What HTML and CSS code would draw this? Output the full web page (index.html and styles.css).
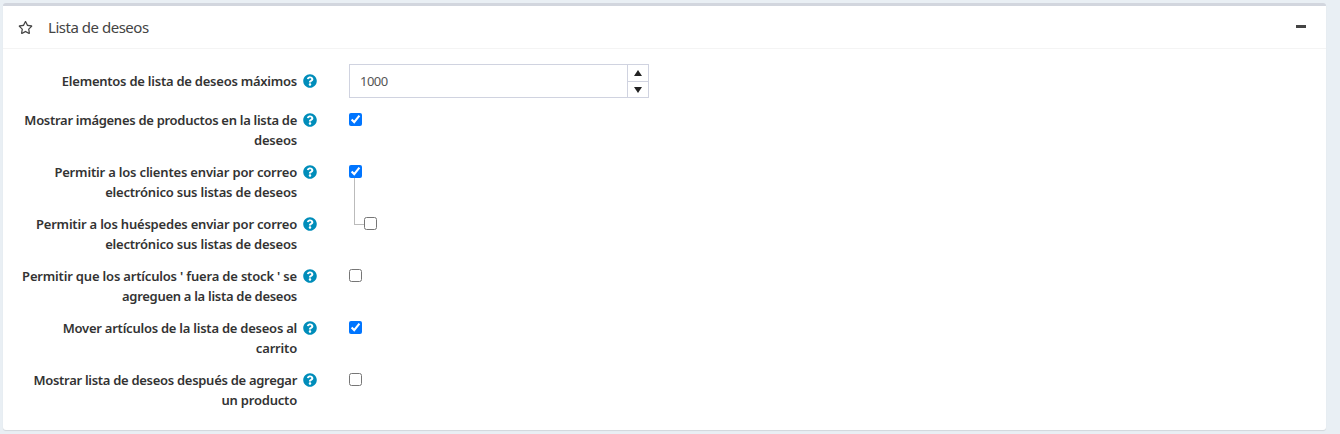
FILE: index.html
```
<!DOCTYPE html>
<html lang="es">
<head>
<meta charset="utf-8">
<title>Lista de deseos</title>
<link rel="stylesheet" href="styles.css">
</head>
<body>
<svg class="defs" width="0" height="0" aria-hidden="true">
  <symbol id="help" viewBox="0 0 512 512"><path d="M504 256c0 136.997-111.043 248-248 248S8 392.997 8 256C8 119.083 119.043 8 256 8s248 111.083 248 248zM262.655 90c-54.497 0-89.255 22.957-116.549 63.758-3.536 5.286-2.353 12.415 2.715 16.258l34.699 26.31c5.205 3.947 12.621 3.008 16.665-2.122 17.864-22.658 30.113-35.797 57.303-35.797 20.429 0 45.698 13.148 45.698 32.958 0 14.976-12.363 22.667-32.534 33.976C247.128 238.528 216 254.941 216 296v4c0 6.627 5.373 12 12 12h56c6.627 0 12-5.373 12-12v-1.333c0-28.462 83.186-29.647 83.186-106.667 0-58.002-60.165-102-116.531-102zM256 338c-25.365 0-46 20.635-46 46 0 25.364 20.635 46 46 46s46-20.636 46-46c0-25.365-20.635-46-46-46z"/></symbol>
</svg>
<section class="card">
  <header class="card-header">
    <svg class="star" viewBox="0 0 576 512"><path d="M528.1 171.5L382 150.2 316.700 17.800c-11.700-23.600-45.600-23.900-57.400 0L194 150.200 47.900 171.500c-26.200 3.800-36.700 36.100-17.700 54.600l105.700 103-25 145.500c-4.500 26.300 23.200 46 46.400 33.700L288 439.600l130.700 68.700c23.200 12.200 50.900-7.400 46.400-33.700l-25-145.500 105.700-103c19-18.500 8.500-50.800-17.700-54.600zM388.600 312.300l23.700 138.400L288 385.400l-124.300 65.300 23.700-138.400-100.600-98 139-20.200 62.200-126 62.200 126 139 20.200-100.600 98z"/></svg>
    <h1 class="title">Lista de deseos</h1>
    <button class="collapse" aria-label="Contraer"></button>
  </header>
  <div class="card-body">
    <div class="row row-number">
      <label class="label"><span class="snug">Elementos de lista de deseos máximos</span></label>
      <svg class="help"><use href="#help"/></svg>
      <div class="number"><span class="value">1000</span><span class="steps"><i class="step"><svg viewBox="0 0 8 6"><path d="M4 0 8 6H0z"/></svg></i><i class="step"><svg viewBox="0 0 8 6"><path d="M0 0H8L4 6z"/></svg></i></span></div>
    </div>
    <div class="row">
      <label class="label"><span class="tight">Mostrar imágenes de productos en la lista de</span><span>deseos</span></label>
      <svg class="help"><use href="#help"/></svg>
      <input class="check" type="checkbox" checked>
    </div>
    <div class="row">
      <label class="label"><span class="loose">Permitir a los clientes enviar por correo</span><span>electrónico sus listas de deseos</span></label>
      <svg class="help"><use href="#help"/></svg>
      <input class="check" type="checkbox" checked>
    </div>
    <div class="row">
      <label class="label"><span>Permitir a los huéspedes enviar por correo</span><span>electrónico sus listas de deseos</span></label>
      <svg class="help"><use href="#help"/></svg>
      <div class="nested"><span class="branch"></span><input class="check" type="checkbox"></div>
    </div>
    <div class="row">
      <label class="label"><span class="loose">Permitir que los artículos ' fuera de stock ' se</span><span class="tight">agreguen a la lista de deseos</span></label>
      <svg class="help"><use href="#help"/></svg>
      <input class="check" type="checkbox">
    </div>
    <div class="row">
      <label class="label"><span class="snug">Mover artículos de la lista de deseos al</span><span class="loose">carrito</span></label>
      <svg class="help"><use href="#help"/></svg>
      <input class="check" type="checkbox" checked>
    </div>
    <div class="row">
      <label class="label"><span class="tight">Mostrar lista de deseos después de agregar</span><span>un producto</span></label>
      <svg class="help"><use href="#help"/></svg>
      <input class="check" type="checkbox">
    </div>
  </div>
</section>
</body>
</html>
```
FILE: styles.css
```
* { box-sizing: border-box; }
body { margin: 0; padding: 3px 14px 0 3px; height: 434px; overflow: hidden; background: #e9eff4; font-family: "Noto Sans", sans-serif; color: #333; }
.defs { position: absolute; }
.card { height: 427px; background: #fff; border-top: 3px solid #d2d6de; border-radius: 3px; box-shadow: 0 1px 1px rgba(0,0,0,.1); }
.card-header { display: flex; align-items: center; height: 43px; padding: 0 20px 0 15px; border-bottom: 1px solid #f4f4f4; }
.star { width: 15px; height: 13px; fill: #444; }
.title { margin: 0 auto 0 15px; font-size: 15px; font-weight: 400; line-height: 20px; color: #444; letter-spacing: -.48px; }
.collapse { width: 10px; height: 3px; margin-top: -2px; padding: 0; border: 0; background: #444; }
.card-body { padding-top: 15px; }
.row { display: flex; align-items: flex-start; height: 40px; margin-bottom: 12px; }
.row-number { height: 34px; }
.label { display: flex; flex-direction: column; align-items: flex-end; width: 294px; font-size: 13px; font-weight: 600; line-height: 20px; white-space: nowrap; letter-spacing: -.2px; }
.snug { letter-spacing: -.24px; }
.tight { letter-spacing: -.29px; }
.loose { letter-spacing: -.18px; }
.row-number .label { padding-top: 7px; }
.help { width: 14px; height: 14px; margin: 3px 32px 0 6px; fill: #008dba; flex: none; }
.row-number .help { margin-top: 10px; }
.check { width: 13px; height: 13px; margin: 3px 0 0; }
.number { display: flex; width: 300px; height: 34px; border: 1px solid #d0d3e0; }
.value { flex: 1; padding-left: 10px; font-size: 13px; line-height: 33px; color: #555; letter-spacing: -.5px; }
.steps { width: 21px; border-left: 1px solid #d0d3e0; }
.step { display: flex; align-items: center; justify-content: center; height: 16px; }
.step + .step { border-top: 1px solid #d0d3e0; }
.step svg { width: 8px; height: 6px; fill: #222; }
.nested { display: flex; }
.branch { width: 10px; height: 47px; margin: -36px 0 0 5px; border-left: 1px solid #bbb; border-bottom: 1px solid #bbb; }
```
